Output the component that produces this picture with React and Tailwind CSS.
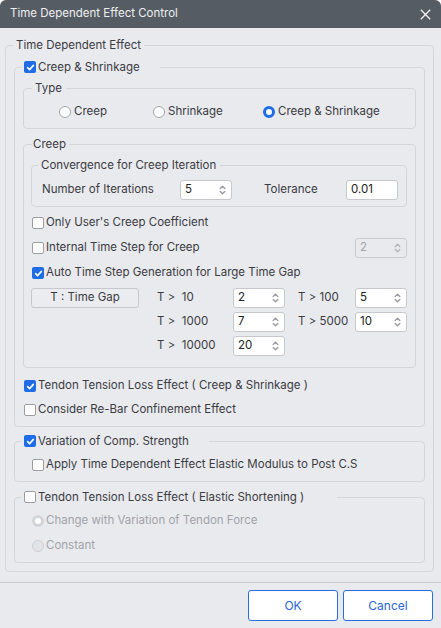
// Time Dependent Effect Control — modal dialog with nested group boxes.
const TEXT = 'text-[#3b3b42]';

function Check({ checked, disabled }) {
  if (checked) {
    return (
      <span className="flex h-[12px] w-[12px] shrink-0 items-center justify-center rounded-[2px] bg-[#1f6de6]">
        <svg width="9" height="9" viewBox="0 0 9 9" fill="none">
          <path d="M1.6 4.7 L3.6 6.6 L7.4 2.4" stroke="#fff" strokeWidth="1.6" strokeLinecap="round" strokeLinejoin="round" />
        </svg>
      </span>
    );
  }
  return (
    <span
      className={`h-[12px] w-[12px] shrink-0 rounded-[2px] border ${
        disabled ? 'border-[#cbcdd2] bg-[#e6e7eb]' : 'border-[#9c9ea4] bg-white'
      }`}
    />
  );
}

function Radio({ checked, disabled }) {
  if (disabled) {
    return checked ? (
      <span className="h-[12px] w-[12px] shrink-0 rounded-full border-[3px] border-[#d3d4d8] bg-white" />
    ) : (
      <span className="h-[12px] w-[12px] shrink-0 rounded-full border border-[#cdced3] bg-[#e2e3e7]" />
    );
  }
  return checked ? (
    <span className="h-[12px] w-[12px] shrink-0 rounded-full border-[3.5px] border-[#1f6de6] bg-white" />
  ) : (
    <span className="h-[12px] w-[12px] shrink-0 rounded-full border border-[#a3a5aa] bg-white" />
  );
}

function CheckRow({ checked, children, className = '' }) {
  return (
    <div className={`flex h-[20px] items-center gap-[2px] ${className}`}>
      <Check checked={checked} />
      <span>{children}</span>
    </div>
  );
}

function Spin({ value, disabled }) {
  const c = disabled ? '#b4b6bb' : '#9a9ca1';
  return (
    <div
      className={`flex h-[20px] w-[52px] shrink-0 items-center justify-between rounded-[3px] border pl-[4px] pr-[5px] ${
        disabled ? 'border-[#c9cbd0] bg-[#e9eaee] text-[#a3a3a8]' : 'border-[#c6c8cd] bg-white text-[#222]'
      }`}
    >
      <span>{value}</span>
      <svg width="7" height="12" viewBox="0 0 7 12" fill="none">
        <path d="M1.2 4.6 L3.5 2.3 L5.8 4.6" stroke={c} strokeWidth="1.4" strokeLinecap="round" strokeLinejoin="round" />
        <path d="M1.2 7.4 L3.5 9.7 L5.8 7.4" stroke={c} strokeWidth="1.4" strokeLinecap="round" strokeLinejoin="round" />
      </svg>
    </div>
  );
}

// fieldset keeps no padding so the legend offset is measured from the border
function Group({ legend, legendClass = '', className = '', bodyClass = '', children }) {
  return (
    <fieldset className={`rounded-[4px] border border-[#d3d5da] ${className}`}>
      <legend className={`flex h-[18px] items-center leading-[18px] ${legendClass}`}>{legend}</legend>
      <div className={bodyClass}>{children}</div>
    </fieldset>
  );
}

export default function App() {
  const gap = [
    ['T >  10', '2', 'T > 100', '5'],
    ['T >  1000', '7', 'T > 5000', '10'],
    ['T >  10000', '20'],
  ];

  return (
    <div className={`flex h-[628px] w-[441px] flex-col overflow-hidden rounded-t-[6px] bg-[#e9eaee] font-[Inter,sans-serif] text-[11.5px] ${TEXT}`}>
      {/* title bar */}
      <div className="flex h-[28px] shrink-0 items-center justify-between bg-[#565c64] pl-[10px] pr-[10px] text-[#eeeff1]">
        <span>Time Dependent Effect Control</span>
        <svg width="11" height="11" viewBox="0 0 11 11" fill="none">
          <path d="M0.8 0.8 L10.2 10.2 M10.2 0.8 L0.8 10.2" stroke="#f2f2f2" strokeWidth="1.3" />
        </svg>
      </div>

      <Group
        className="ml-[5px] mr-[8px] mt-[8px]"
        bodyClass="px-[8px] pb-[8px]"
        legendClass="ml-[7px] px-[3px]"
        legend="Time Dependent Effect"
      >
        <Group
          className="mt-[4px]"
          bodyClass="pb-[6px] px-[8px]"
          legendClass="ml-[6px] pl-[3px] pr-[20px] gap-[2px]"
          legend={
            <>
              <Check checked />
              <span>Creep &amp; Shrinkage</span>
            </>
          }
        >
          <Group className="mt-[3px]" bodyClass="pb-[7px] pt-[6px]" legendClass="ml-[8px] pl-[3px] pr-[4px]" legend="Type">
            <div className="flex h-[18px] items-center pl-[35px]">
              <div className="flex w-[94px] items-center gap-[3px]">
                <Radio />
                <span>Creep</span>
              </div>
              <div className="flex w-[110px] items-center gap-[3px]">
                <Radio />
                <span>Shrinkage</span>
              </div>
              <div className="flex items-center gap-[3px]">
                <Radio checked />
                <span>Creep &amp; Shrinkage</span>
              </div>
            </div>
          </Group>

          <Group
            className="mt-[6px]"
            bodyClass="pb-[11px] pl-[7px] pr-[8px]"
            legendClass="ml-[8px] pl-[1px] pr-[3px]"
            legend="Creep"
          >
            <Group
              className="mt-[3px]"
              bodyClass="pb-[6px] pt-[6px]"
              legendClass="ml-[6px] pl-[3px] pr-[4px]"
              legend="Convergence for Creep Iteration"
            >
              <div className="flex items-center pl-[10px]">
                <span className="w-[138px]">Number of Iterations</span>
                <Spin value="5" />
                <span className="ml-[32px] w-[82px]">Tolerance</span>
                <div className="flex h-[20px] w-[52px] items-center rounded-[3px] border border-[#c6c8cd] bg-white pl-[4px] text-[#222]">
                  0.01
                </div>
              </div>
            </Group>

            <div className="mt-[6px] flex flex-col gap-[5px] pl-[1px]">
              <CheckRow>Only User's Creep Coefficient</CheckRow>
              <div className="flex items-center justify-between">
                <CheckRow>Internal Time Step for Creep</CheckRow>
                <Spin value="2" disabled />
              </div>
              <CheckRow checked>Auto Time Step Generation for Large Time Gap</CheckRow>
            </div>

            <div className="mt-[5px] flex items-start">
              <div className="flex h-[20px] w-[108px] items-center justify-center rounded-[3px] border border-[#c6c8cd] bg-[#ebecef]">
                T : Time Gap
              </div>
              <div className="ml-[18px] grid grid-cols-[76px_52px_70px_52px] gap-y-[4px]">
                {gap.map((r) => (
                  <div key={r[0]} className="contents">
                    <span className="flex h-[20px] items-center whitespace-pre">{r[0]}</span>
                    <Spin value={r[1]} />
                    {r[2] ? (
                      <>
                        <span className="flex h-[20px] items-center whitespace-pre pl-[13px]">{r[2]}</span>
                        <Spin value={r[3]} />
                      </>
                    ) : null}
                  </div>
                ))}
              </div>
            </div>
          </Group>

          <div className="mt-[8px] flex flex-col gap-[4px] pl-[1px]">
            <CheckRow checked>Tendon Tension Loss Effect ( Creep &amp; Shrinkage )</CheckRow>
            <CheckRow>Consider Re-Bar Confinement Effect</CheckRow>
          </div>
        </Group>

        <Group
          className="mt-[5px]"
          bodyClass="pb-[6px] pt-[5px] pl-[17px]"
          legendClass="ml-[6px] pl-[3px] pr-[20px] gap-[2px]"
          legend={
            <>
              <Check checked />
              <span>Variation of Comp. Strength</span>
            </>
          }
        >
          <CheckRow>Apply Time Dependent Effect Elastic Modulus to Post C.S</CheckRow>
        </Group>

        <Group
          className="mt-[6px]"
          bodyClass="pb-[6px] pt-[5px] pl-[17px]"
          legendClass="ml-[6px] pl-[3px] pr-[33px] gap-[2px]"
          legend={
            <>
              <Check />
              <span>Tendon Tension Loss Effect ( Elastic Shortening )</span>
            </>
          }
        >
          <div className="flex flex-col gap-[5px] text-[#a2a3a8]">
            <div className="flex h-[20px] items-center gap-[2px]">
              <Radio checked disabled />
              <span>Change with Variation of Tendon Force</span>
            </div>
            <div className="flex h-[20px] items-center gap-[2px]">
              <Radio disabled />
              <span>Constant</span>
            </div>
          </div>
        </Group>
      </Group>

      <div className="mt-[10px] h-px shrink-0 bg-[#cbccd1]" />

      <div className="mt-[7px] flex justify-end gap-[5px] pr-[8px]">
        <button className="h-[31px] w-[90px] rounded-[3px] border border-[#2a6de0] bg-white text-[12px] text-[#2a64d6]">
          OK
        </button>
        <button className="h-[31px] w-[90px] rounded-[3px] border border-[#2a6de0] bg-white text-[12px] text-[#2a64d6]">
          Cancel
        </button>
      </div>
    </div>
  );
}
